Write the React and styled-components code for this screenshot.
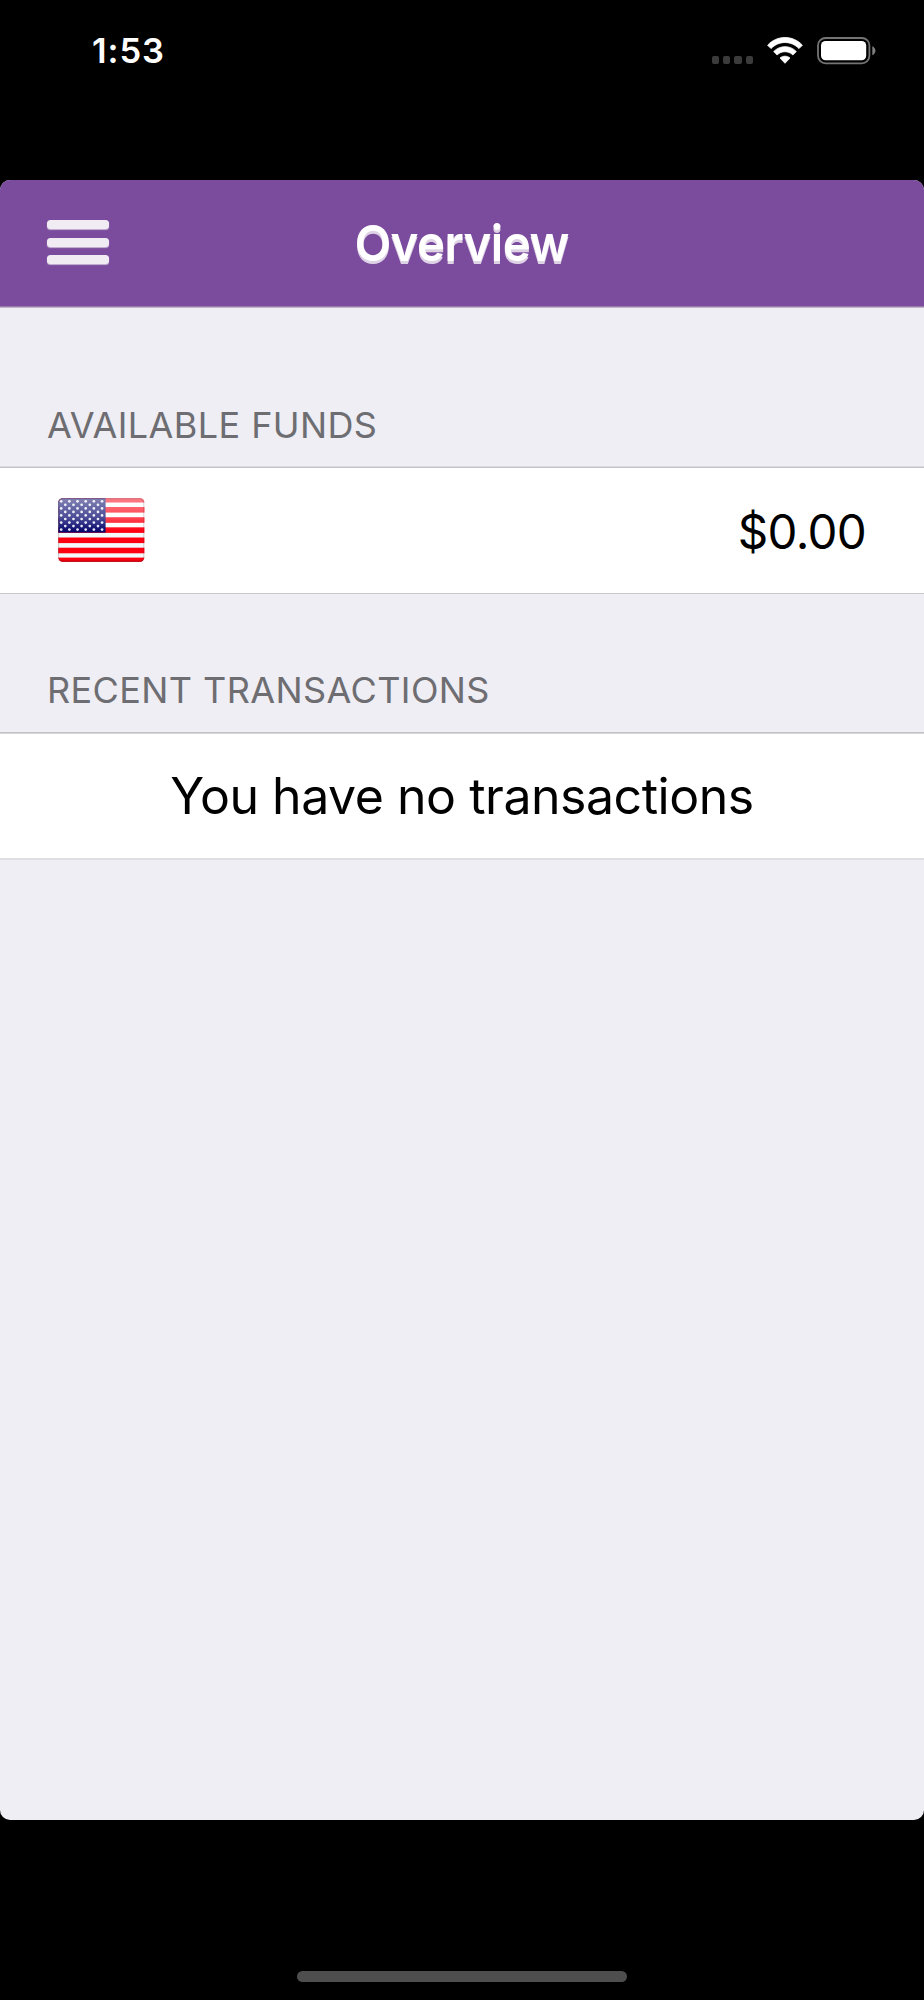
import React from 'react';
import styled, { createGlobalStyle } from 'styled-components';

const stripes = [1.7, 11.8, 22, 32.1, 42.3, 52.5, 62.4];
const starRows = [0, 1, 2, 3, 4, 5, 6, 7, 8];

const WifiIcon = () => (
  <svg width='36' height='28' viewBox='0 0 36 28'>
    <path
      d='M0.6 8.2 C10 -2.1 26 -2.1 35.4 8.2 L32 11.6 C24.3 3.5 11.7 3.5 4 11.6 Z'
      fill='#fff'
      stroke='#fff'
      strokeWidth='0.8'
      strokeLinejoin='round'
    />
    <path
      d='M6.7 14.6 C12.8 8 23.2 8 29.3 14.6 L25.9 18 C21.5 13.6 14.5 13.6 10.1 18 Z'
      fill='#fff'
      stroke='#fff'
      strokeWidth='0.8'
      strokeLinejoin='round'
    />
    <path
      d='M13 21 C15.8 18.6 20.2 18.6 23 21 L18 26.3 Z'
      fill='#fff'
      stroke='#fff'
      strokeWidth='0.8'
      strokeLinejoin='round'
    />
  </svg>
);

const BatteryIcon = () => (
  <svg width='59' height='28' viewBox='0 0 59 28'>
    <rect
      x='1'
      y='1'
      width='51.4'
      height='25.4'
      rx='7.6'
      fill='none'
      stroke='#747474'
      strokeWidth='1.8'
    />
    <rect x='4' y='4' width='45.2' height='19.3' rx='4.6' fill='#fff' />
    <path d='M55.3 9.3 C59.5 11 59.5 16.6 55.3 18.2 Z' fill='#808080' />
  </svg>
);

const UsFlag = () => (
  <svg width='87' height='64' viewBox='0 0 87 64'>
    <defs>
      <clipPath id='flagShape'>
        <rect x='0.2' y='0.3' width='86.2' height='63.5' rx='4.5' />
      </clipPath>
      <linearGradient id='gloss' x1='0' y1='0' x2='0' y2='1'>
        <stop offset='0' stopColor='#fff' stopOpacity='0.5' />
        <stop offset='0.6' stopColor='#fff' stopOpacity='0.27' />
        <stop offset='1' stopColor='#fff' stopOpacity='0' />
      </linearGradient>
    </defs>
    <g clipPath='url(#flagShape)'>
      <rect width='87' height='64' fill='#fff' />
      <rect y='35' width='87' height='29' fill='#f2fafb' />
      {stripes.map((y) => (
        <rect key={y} y={y - 2.8} width='87' height='5.6' fill='#ff0012' />
      ))}
      <rect y='62.4' width='87' height='1.6' fill='#dc0008' />
      <rect width='47.6' height='34.6' fill='#08086e' />
      {starRows.map((row) =>
        [0, 1, 2, 3, 4, 5]
          .slice(row % 2)
          .map((col) => (
            <circle
              key={`${row}-${col}`}
              cx={3.2 + col * 8.17 - (row % 2) * 4.08}
              cy={3.3 + row * 3.54}
              r='1.35'
              fill='#e8e8f6'
            />
          ))
      )}
      <rect width='87' height='33' fill='url(#gloss)' />
      <rect
        x='0.6'
        y='0.7'
        width='85.4'
        height='62.7'
        rx='4.2'
        fill='none'
        stroke='#502030'
        strokeOpacity='0.3'
      />
    </g>
  </svg>
);

const App = () => {
  return (
    <Screen>
      <GlobalStyle />
      <StatusBar>
        <Time>1:53</Time>
        <StatusIcons>
          <Signal>
            <SignalDot />
            <SignalDot />
            <SignalDot />
            <SignalDot />
          </Signal>
          <WifiIcon />
          <BatteryIcon />
        </StatusIcons>
      </StatusBar>
      <Panel>
        <NavBar>
          <MenuButton type='button' aria-label='Menu'>
            <MenuBar />
            <MenuBar />
            <MenuBar />
          </MenuButton>
          <Title>Overview</Title>
        </NavBar>
        <SectionHeader $height='158px' $bottom='19px'>
          <SectionLabel>AVAILABLE FUNDS</SectionLabel>
        </SectionHeader>
        <FundsRow>
          <UsFlag />
          <Amount>$0.00</Amount>
        </FundsRow>
        <SectionHeader $height='138px' $bottom='20px'>
          <SectionLabel>RECENT TRANSACTIONS</SectionLabel>
        </SectionHeader>
        <EmptyRow>
          <EmptyText>You have no transactions</EmptyText>
        </EmptyRow>
      </Panel>
      <Footer>
        <HomeIndicator />
      </Footer>
    </Screen>
  );
};

const GlobalStyle = createGlobalStyle`
  * {
    box-sizing: border-box;
  }
  body {
    margin: 0;
    background: #000;
    font-family: Inter, 'Liberation Sans', sans-serif;
  }
  svg {
    display: block;
    flex-shrink: 0;
  }
`;

const Screen = styled.div`
  display: flex;
  flex-direction: column;
  width: 924px;
  height: 2000px;
  background: #000;
  overflow: hidden;
`;

const StatusBar = styled.header`
  display: flex;
  justify-content: space-between;
  align-items: flex-start;
  height: 180px;
  padding: 36px 48px 0 92px;
`;

const Time = styled.span`
  color: #fff;
  font-size: 34.5px;
  font-weight: 600;
  line-height: 29px;
  letter-spacing: 0.9px;
`;

const StatusIcons = styled.div`
  display: flex;
  gap: 14px;
  padding-top: 0.5px;
`;

const Signal = styled.div`
  display: flex;
  align-items: flex-end;
  gap: 4px;
  height: 27px;
`;

const SignalDot = styled.span`
  width: 7.3px;
  height: 7.3px;
  border-radius: 2px;
  background: #3b3b3b;
`;

const Panel = styled.main`
  height: 1640px;
  background: #efeef4;
  border-radius: 10px;
  overflow: hidden;
`;

const NavBar = styled.nav`
  display: grid;
  grid-template-columns: 1fr auto 1fr;
  align-items: center;
  height: 128px;
  padding: 0 47px;
  background: #7b4b9d;
  border-bottom: 1px solid #c0b8c8;
  box-shadow: inset 0 -1px 0 #9a7bb0;
`;

const MenuButton = styled.button`
  display: flex;
  flex-direction: column;
  gap: 8.5px;
  width: 62px;
  padding: 0;
  margin-bottom: 3px;
  background: none;
  border: none;
`;

const MenuBar = styled.span`
  height: 9px;
  border-radius: 3.5px;
  background: #f1ecf4;
  box-shadow: 0 1px 1px #c9b6d6;
`;

const Title = styled.h1`
  margin: 0 0 1px;
  color: #fff;
  font-size: 50px;
  font-weight: 600;
  line-height: 60px;
  letter-spacing: -0.6px;
  text-shadow: 0 2.5px 0 #ded2e5;
  transform: scaleX(0.95);
`;

const SectionHeader = styled.div`
  display: flex;
  align-items: flex-end;
  height: ${(props) => props.$height};
  padding: 0 47px ${(props) => props.$bottom};
`;

const SectionLabel = styled.h2`
  margin: 0;
  color: #6d6d72;
  font-size: 36px;
  font-weight: 400;
  line-height: 44px;
  letter-spacing: 0.4px;
`;

const Row = styled.div`
  display: flex;
  align-items: center;
  height: 128px;
  background: #fff;
`;

const FundsRow = styled(Row)`
  justify-content: space-between;
  padding: 1px 58px 1px;
  border-top: 1px solid #dcdbe0;
  border-bottom: 1px solid #c8c7cc;
  box-shadow: inset 0 1px 0 #c2c1c6;
`;

const Amount = styled.span`
  padding-top: 3px;
  color: #000;
  font-size: 47.5px;
  line-height: 56px;
  letter-spacing: -0.7px;
`;

const EmptyRow = styled(Row)`
  justify-content: center;
  padding: 1px 0;
  border-top: 1px solid #c4c3c8;
  border-bottom: 2px solid #dfdee3;
  box-shadow: inset 0 1px 0 #d6d6d9;
`;

const EmptyText = styled.p`
  margin: 0;
  color: #000;
  font-size: 50px;
  line-height: 60px;
  letter-spacing: -0.47px;
`;

const Footer = styled.footer`
  display: flex;
  flex: 1;
  justify-content: center;
  align-items: flex-end;
  padding-bottom: 18px;
`;

const HomeIndicator = styled.div`
  width: 330px;
  height: 11px;
  border-radius: 6px;
  background: #4e4e4e;
`;

export default App;
